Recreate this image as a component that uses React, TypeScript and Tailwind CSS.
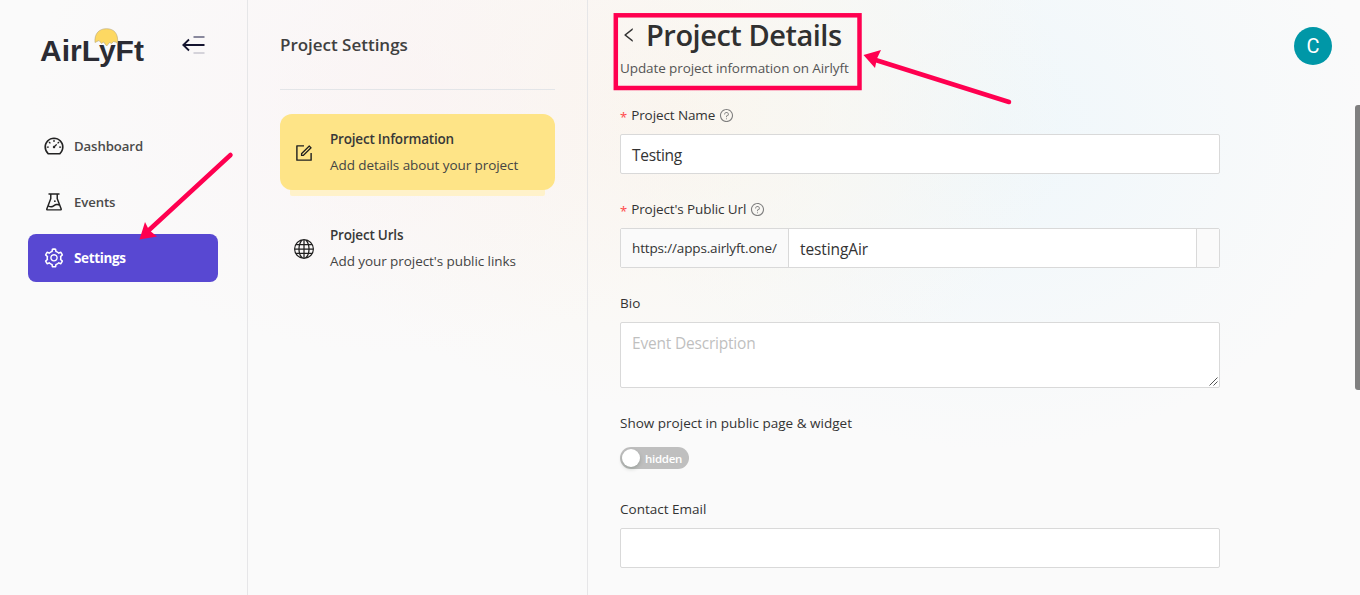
import React from "react";
import {
  AiOutlineDashboard,
  AiOutlineExperiment,
  AiOutlineSetting,
  AiOutlineForm,
  AiOutlineLeft,
  AiOutlineQuestionCircle,
} from "react-icons/ai";
import { BsGlobe } from "react-icons/bs";

function Logo() {
  return (
    <div className="relative h-[44px] w-[106px]">
      <span className="absolute -left-px top-[6px] whitespace-nowrap font-['Liberation_Sans'] text-[30px] font-bold leading-[38px] text-[#2b2b33]">
        AirLyFt
      </span>
      <svg className="absolute left-[53px] top-[2px]" width="25" height="20" viewBox="0 0 25 20">
        <path
          d="M1 14.500C0.300 5.500 5 0.700 12.500 0.700S24.700 5.500 23.500 15.500L21.500 14L19.500 13.500L17.500 15.500L15.500 14.500L12.700 18L9.500 14L7.500 15.500L5 12.500L3 13.500Z"
          fill="#fdd862"
          stroke="#b8a878"
          strokeWidth="0.6"
        />
      </svg>
    </div>
  );
}

function CollapseIcon() {
  return (
    <svg width="24" height="20" viewBox="0 0 24 20" fill="none" strokeWidth="1.8">
      <path d="M11.500 2H22.500" stroke="#7c7b92" />
      <path d="M1.500 10H22.500M7 4.500L1.300 10L7 15.500" stroke="#14142f" />
      <path d="M11.500 18H22.500" stroke="#d1cfd6" />
    </svg>
  );
}

function NavItem({ icon, label, active }: { icon: React.ReactNode; label: string; active?: boolean }) {
  return (
    <a
      className={
        active
          ? "flex h-12 items-center gap-[9px] rounded-lg bg-[#5848d2] pl-[15px] text-[13.500px] font-bold tracking-[-0.35px] text-white"
          : "flex h-12 items-center gap-[9px] pl-[15px] text-[13.200px] font-semibold tracking-[-0.1px] text-[#4a4a4a]"
      }
    >
      <span className={active ? "text-white" : "text-[#222]"}>{icon}</span>
      <span className={active ? "pt-px" : "pt-0.5"}>{label}</span>
    </a>
  );
}

function SettingCard({ icon, title, text, active }: { icon: React.ReactNode; title: string; text: string; active?: boolean }) {
  return (
    <div
      className={
        active
          ? "flex h-[76px] items-center gap-4 rounded-xl bg-[#fee487] pl-[14px] shadow-[0_16px_0_-10px_#fff2ca]"
          : "flex h-[76px] items-center gap-4 pl-[14px]"
      }
    >
      <span className="pt-0.5 text-[#1f1f1f]">{icon}</span>
      <div>
        <div className="text-[13.500px] font-semibold leading-[26px] tracking-[-0.2px] text-[#383838]">{title}</div>
        <div className="text-[13.500px] leading-[26px] tracking-[-0.07px] text-[#444]">{text}</div>
      </div>
    </div>
  );
}

function Label({ text, required }: { text: string; required?: boolean }) {
  return (
    <div className="flex h-[22px] items-center text-[13.500px] text-[#333]">
      {required && <span className="mr-1 mt-1 font-['Noto_Sans'] text-[13px] leading-none text-[#ff4d4f]">*</span>}
      <span className={required ? "tracking-[-0.1px]" : "tracking-[0.01px]"}>{text}</span>
      {required && <AiOutlineQuestionCircle className="ml-1 text-[#808080]" size={15} />}
    </div>
  );
}

function Annotations() {
  return (
    <svg className="pointer-events-none absolute left-0 top-0" width="1360" height="595" viewBox="0 0 1360 595">
      <g fill="#ff0050" stroke="#ff0050">
        <rect x="615.800" y="15.300" width="243.700" height="72.700" fill="none" strokeWidth="4.500" />
        <path d="M1009 102L874 59.500" strokeWidth="4.500" strokeLinecap="round" />
        <path d="M863.500 55L881 50L877 58.500L875 68Z" stroke="none" />
        <path d="M230.500 155L148 231" strokeWidth="4.500" strokeLinecap="round" />
        <path d="M139.500 239.500L145 222L149 230L157 236.500Z" stroke="none" />
      </g>
    </svg>
  );
}

export default function App() {
  return (
    <div className="relative flex h-[595px] w-[1360px] overflow-hidden bg-[#fafafa] bg-[radial-gradient(ellipse_370px_260px_at_400px_95px,#fbf0f280_0%,#fafafa00_100%),radial-gradient(ellipse_400px_300px_at_670px_110px,#faf6ee_0%,#fafafa00_100%),radial-gradient(ellipse_380px_320px_at_990px_130px,#eff7fb_0%,#fafafa00_100%)] font-['Open_Sans','Noto_Sans',sans-serif]">
      <aside className="flex w-[248px] shrink-0 flex-col border-r border-[#e6e6e8]">
        <div className="flex h-[94px] items-start pl-[41px] pt-[26px]">
          <Logo />
          <div className="ml-[35px] mt-[9px]">
            <CollapseIcon />
          </div>
        </div>
        <nav className="mx-7 mr-[29px] mt-7 flex flex-col gap-2">
          <NavItem icon={<AiOutlineDashboard size={22} />} label="Dashboard" />
          <NavItem icon={<AiOutlineExperiment size={22} />} label="Events" />
          <NavItem icon={<AiOutlineSetting size={22} />} label="Settings" active />
        </nav>
      </aside>

      <section className="w-[340px] shrink-0 border-r border-[#e6e6e8] px-8">
        <h2 className="flex h-[90px] items-center border-b border-[#e3e5e8] text-[17px] font-semibold tracking-[-0.02px] text-[#404040]">
          Project Settings
        </h2>
        <div className="mt-6 flex flex-col gap-5">
          <SettingCard icon={<AiOutlineForm size={20} />} title="Project Information" text="Add details about your project" active />
          <SettingCard icon={<BsGlobe size={20} />} title="Project Urls" text="Add your project's public links" />
        </div>
      </section>

      <main className="w-[632px] shrink-0 pl-8">
        <div className="flex h-[72px] items-center pb-0.5">
          <AiOutlineLeft size={18} className="text-[#333]" />
          <h1 className="ml-2 text-[29px] font-semibold tracking-[-0.48px] text-[#303030]">Project Details</h1>
        </div>
        <p className="-mt-[15px] text-[13.500px] leading-[22px] tracking-[-0.1px] text-[#555]">Update project information on Airlyft</p>

        <div className="mt-[25px] flex flex-col gap-6">
          <div className="flex flex-col gap-2">
            <Label text="Project Name" required />
            <div className="flex h-10 items-center rounded-[2px] border border-[#d9d9d9] bg-white px-[11px] pt-1 text-[15.500px] tracking-[-0.3px] text-[#333]">Testing</div>
          </div>
          <div className="flex flex-col gap-2">
            <Label text="Project's Public Url" required />
            <div className="flex h-10 rounded-[2px] border border-[#d9d9d9] bg-white">
              <div className="flex w-[168px] items-center border-r border-[#d9d9d9] bg-[#fafafa] pl-[11px] text-[13.500px] tracking-[-0.15px] text-[#333]">https://apps.airlyft.one/</div>
              <div className="flex flex-1 items-center pl-[11px] pt-1 text-[15.500px] tracking-[-0.1px] text-[#333]">testingAir</div>
              <div className="w-[23px] border-l border-[#d9d9d9] bg-[#fafafa]" />
            </div>
          </div>
          <div className="flex flex-col gap-2">
            <Label text="Bio" />
            <div className="flex h-[66px] justify-between rounded-[2px] border border-[#d9d9d9] bg-white pl-[11px] text-[15.500px] text-[#bfbfbf]">
              <span className="pt-[9px] tracking-[-0.2px]">Event Description</span>
              <svg className="self-end" width="10" height="10" viewBox="0 0 10 10" stroke="#555" strokeWidth="1">
                <path d="M0.500 8.500L8.500 0.500M4.500 8.500L8.500 4.500" />
              </svg>
            </div>
          </div>
          <div className="flex flex-col gap-[13px]">
            <Label text="Show project in public page & widget" />
            <div className="flex h-[22px] w-[69px] items-center gap-[5px] rounded-full bg-[#bfbfbf] pl-0.5 font-semibold text-white">
              <span className="h-[18px] w-[18px] rounded-full bg-white shadow-[0_2px_4px_rgba(0,35,11,0.2)]" />
              <span className="pt-px text-[11.500px] tracking-[-0.3px]">hidden</span>
            </div>
          </div>
          <div className="mt-[5px] flex flex-col gap-2">
            <Label text="Contact Email" />
            <div className="h-10 rounded-[2px] border border-[#d9d9d9] bg-white" />
          </div>
        </div>
      </main>

      <div className="flex flex-1 justify-between">
        <div className="ml-[74px] mt-[27px] flex h-[38px] w-[38px] items-center justify-center rounded-full bg-[#0097a7] font-['Roboto'] text-[20px] text-white">C</div>
        <div className="mt-[105px] h-[285px] w-[5px] shrink-0 rounded-l-[3px] bg-[#7f7f7f]" />
      </div>
      <Annotations />
    </div>
  );
}
